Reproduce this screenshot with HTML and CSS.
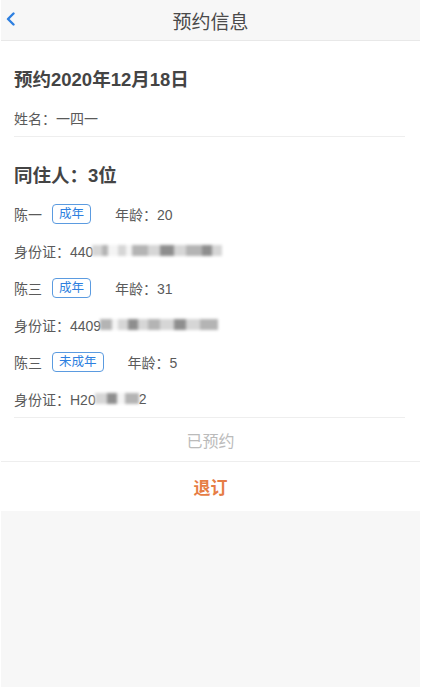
FILE: index.html
```html
<!DOCTYPE html>
<html lang="zh">
<head>
<meta charset="UTF-8">
<meta name="viewport" content="width=device-width, initial-scale=1.0">
<title>预约信息</title>
<link rel="stylesheet" href="styles.css">
</head>
<body>
<div class="app">
    <div class="header">
        <svg class="back" width="11" height="14" viewBox="0 0 11 14"><path d="M8.5 1.5 L3 7 L8.5 12.5" fill="none" stroke="#2d7fe0" stroke-width="2.4" stroke-linecap="round" stroke-linejoin="round"/></svg>
        <span class="title">预约信息</span>
    </div>

    <div class="card">
        <div class="section">
            <h2>预约2020年12月18日</h2>
            <div class="line">姓名：一四一</div>
        </div>

        <div class="section">
            <h2>同住人：3位</h2>

            <div class="line person">
                <span class="name">陈一</span>
                <span class="tag">成年</span>
                <span class="age">年龄：20</span>
            </div>
            <div class="line">身份证：440<span class="mask">
                <i class="b2" style="width:10px"></i><i class="b1" style="width:6px"></i><i class="w" style="width:10px"></i><i class="b2" style="width:8px"></i><i class="w" style="width:6px"></i><i class="b1" style="width:16px"></i><i class="b2" style="width:12px"></i><i class="b3" style="width:14px"></i><i class="b2" style="width:12px"></i><i class="b1" style="width:16px"></i><i class="b3" style="width:10px"></i><i class="b2" style="width:10px"></i>
            </span></div>

            <div class="line person">
                <span class="name">陈三</span>
                <span class="tag">成年</span>
                <span class="age">年龄：31</span>
            </div>
            <div class="line">身份证：4409<span class="mask">
                <i class="b1" style="width:12px"></i><i class="w" style="width:6px"></i><i class="b2" style="width:10px"></i><i class="b3" style="width:10px"></i><i class="b2" style="width:10px"></i><i class="b1" style="width:12px"></i><i class="b2" style="width:14px"></i><i class="b3" style="width:12px"></i><i class="b2" style="width:14px"></i><i class="b1" style="width:18px"></i>
            </span></div>

            <div class="line person">
                <span class="name">陈三</span>
                <span class="tag">未成年</span>
                <span class="age">年龄：5</span>
            </div>
            <div class="line last">身份证：H20<span class="mask">
                <i class="b2" style="width:12px"></i><i class="b3" style="width:10px"></i><i class="w" style="width:8px"></i><i class="b1" style="width:14px"></i>
            </span>2</div>
        </div>

        <div class="status">已预约</div>
    </div>

    <div class="cancel">退订</div>

    <div class="rest"></div>
</div>
</body>
</html>
```

FILE: styles.css
```css
body {
    margin: 0;
    padding: 0;
    background-color: #ffffff;
    font-family: "Liberation Sans", "Noto Sans CJK SC", sans-serif;
    color: #555;
}

.app {
    margin: 0 2px 3px 1px;
    height: 687px;
    display: flex;
    flex-direction: column;
    background-color: #f7f7f7;
}

.header {
    height: 40px;
    display: flex;
    align-items: center;
    justify-content: center;
    background-color: #f7f7f7;
    border-bottom: 1px solid #e8e8e8;
    position: relative;
}

.back {
    position: absolute;
    left: 4px;
    top: 12px;
}

.title {
    font-size: 19px;
    color: #4a4a4a;
}

.card {
    background-color: #ffffff;
    padding: 0 15px 0 13px;
}

.section {
    padding-top: 28px;
    border-bottom: 1px solid #eeeeee;
}

.section h2 {
    margin: 0;
    font-size: 18.5px;
    line-height: 22px;
    font-weight: bold;
    color: #444;
}

.line {
    font-size: 14px;
    color: #5a5a5a;
    height: 37px;
    display: flex;
    align-items: center;
}

.section h2 + .line {
    margin-top: 8px;
}

.section:first-child .line {
    margin-top: 9px;
    height: 36px;
}

.person .name {
    width: 38px;
}

.tag {
    border: 1px solid #5b9be0;
    border-radius: 4px;
    color: #2d7fe0;
    font-size: 12.5px;
    line-height: 18px;
    padding: 0 6px;
}

.age {
    margin-left: 24px;
}

.mask {
    display: inline-flex;
    height: 11px;
    margin-left: -1px;
    filter: blur(1.6px);
}

.mask i {
    display: block;
    height: 11px;
}

.mask .w {
    background-color: #f4f4f4;
}

.mask .b1 {
    background-color: #b4b4b4;
}

.mask .b2 {
    background-color: #d6d6d6;
}

.mask .b3 {
    background-color: #8e8e8e;
}

.status {
    height: 43px;
    display: flex;
    align-items: center;
    justify-content: center;
    font-size: 16px;
    color: #bbbbbb;
    margin: 0 -15px 0 -13px;
    border-bottom: 1px solid #eeeeee;
}

.cancel {
    background-color: #ffffff;
    height: 49px;
    display: flex;
    align-items: center;
    justify-content: center;
    font-size: 17px;
    font-weight: bold;
    color: #e67d45;
}

.rest {
    flex: 1;
}
```
